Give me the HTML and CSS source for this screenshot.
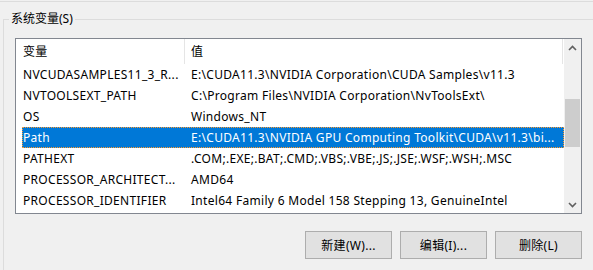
FILE: index.html
```html
<!DOCTYPE html>
<html lang="zh-CN">
<head>
    <meta charset="UTF-8">
    <meta name="viewport" content="width=device-width, initial-scale=1.0">
    <title>环境变量</title>
    <link rel="stylesheet" href="styles.css">
</head>
<body>
    <div class="topline"></div>
    <fieldset class="group">
        <legend>系统变量(S)</legend>
        <div class="listview">
            <div class="table">
                <div class="header">
                    <div class="hcol hname">变量</div>
                    <div class="hcol hvalue">值</div>
                </div>
                <div class="row">
                    <div class="name">NVCUDASAMPLES11_3_R...</div>
                    <div class="value">E:\CUDA11.3\NVIDIA Corporation\CUDA Samples\v11.3</div>
                </div>
                <div class="row">
                    <div class="name">NVTOOLSEXT_PATH</div>
                    <div class="value">C:\Program Files\NVIDIA Corporation\NvToolsExt\</div>
                </div>
                <div class="row">
                    <div class="name">OS</div>
                    <div class="value">Windows_NT</div>
                </div>
                <div class="row selected">
                    <div class="name">Path</div>
                    <div class="value">E:\CUDA11.3\NVIDIA GPU Computing Toolkit\CUDA\v11.3\bi...</div>
                </div>
                <div class="row">
                    <div class="name">PATHEXT</div>
                    <div class="value">.COM;.EXE;.BAT;.CMD;.VBS;.VBE;.JS;.JSE;.WSF;.WSH;.MSC</div>
                </div>
                <div class="row">
                    <div class="name">PROCESSOR_ARCHITECT...</div>
                    <div class="value">AMD64</div>
                </div>
                <div class="row">
                    <div class="name">PROCESSOR_IDENTIFIER</div>
                    <div class="value">Intel64 Family 6 Model 158 Stepping 13, GenuineIntel</div>
                </div>
            </div>
            <div class="scrollbar">
                <div class="arrow">
                    <svg width="9" height="6" viewBox="0 0 9 6"><polyline points="1,5 4.5,1.5 8,5" fill="none" stroke="#606060" stroke-width="1.6"/></svg>
                </div>
                <div class="track"><div class="thumb"></div></div>
                <div class="arrow">
                    <svg width="9" height="6" viewBox="0 0 9 6"><polyline points="1,1 4.5,4.5 8,1" fill="none" stroke="#606060" stroke-width="1.6"/></svg>
                </div>
            </div>
        </div>
        <div class="buttons">
            <button>新建(W)...</button>
            <button>编辑(I)...</button>
            <button>删除(L)</button>
        </div>
    </fieldset>
</body>
</html>
```

FILE: styles.css
```css
body {
    margin: 0;
    width: 593px;
    height: 270px;
    overflow: hidden;
    background-color: #f0f0f0;
    font-family: "Noto Sans", "Noto Sans CJK SC", sans-serif;
    font-size: 12px;
    letter-spacing: 0.3px;
    color: #000;
}
.topline {
    height: 1px;
    margin-top: 1px;
    background-color: #dcdcdc;
}
.group {
    box-sizing: border-box;
    margin: 10px 0 0 3px;
    padding: 0;
    width: 590px;
    height: 258px;
    border: 1px solid #dcdcdc;
    border-right: none;
    border-bottom: none;
    min-width: 0;
}
.group legend {
    margin-left: 5px;
    padding: 0 2px;
    line-height: 14px;
    letter-spacing: 0;
}
.listview {
    display: flex;
    box-sizing: border-box;
    margin: 12px 0 0 11px;
    width: 567px;
    height: 176px;
    border: 1px solid #828790;
    background-color: #fff;
}
.table {
    flex: 1;
}
.header {
    display: flex;
    height: 25px;
    line-height: 25px;
}
.hcol {
    box-sizing: border-box;
    padding-left: 7px;
    border-right: 1px solid #e5e5e5;
}
.hname {
    width: 169px;
}
.hvalue {
    width: 378px;
    padding-left: 6px;
}
.row {
    display: flex;
    height: 21px;
    line-height: 21px;
    margin-left: 6px;
    white-space: nowrap;
}
.row .name {
    width: 162px;
    padding-left: 1px;
    box-sizing: border-box;
}
.row .value {
    flex: 1;
    padding-left: 7px;
    overflow: hidden;
}
.row.selected {
    background-color: #0078d7;
    color: #fff;
    outline: 1px dotted #ff9a2e;
    outline-offset: -1px;
}
.scrollbar {
    display: flex;
    flex-direction: column;
    width: 17px;
    background-color: #f0f0f0;
}
.arrow {
    height: 17px;
    display: flex;
    justify-content: center;
    align-items: center;
}
.track {
    flex: 1;
}
.thumb {
    margin: 43px 1px 0 1px;
    height: 48px;
    background-color: #cdcdcd;
}
.buttons {
    display: flex;
    gap: 8px;
    margin: 17px 0 0 301px;
}
button {
    width: 87px;
    height: 28px;
    padding: 0;
    border: 1px solid #adadad;
    background-color: #e1e1e1;
    font-family: "Noto Sans", "Noto Sans CJK SC", sans-serif;
    font-size: 12px;
    letter-spacing: 0.3px;
    color: #000;
}
```
